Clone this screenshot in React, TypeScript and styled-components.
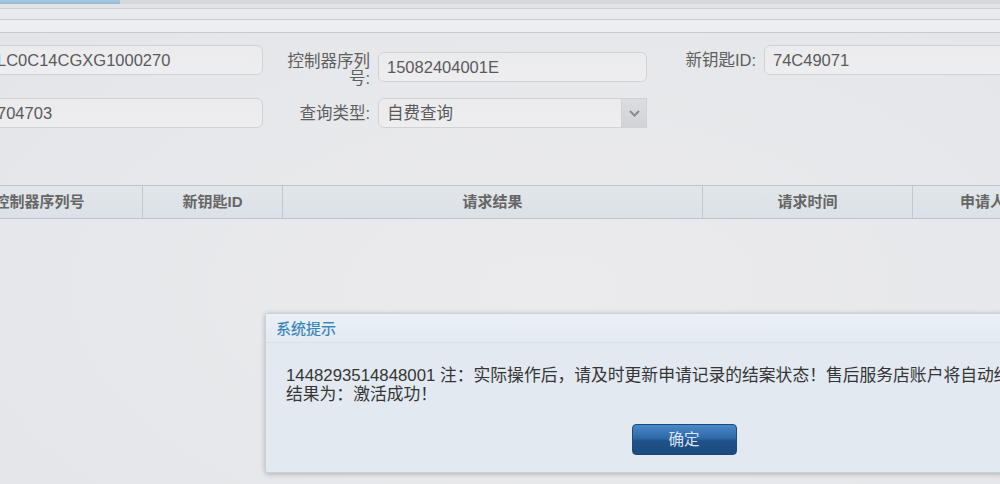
import React from "react";
import styled, { createGlobalStyle } from "styled-components";

const Global = createGlobalStyle`
  html, body { margin: 0; padding: 0; }
  body {
    background: #e7e8eb;
    font-family: "Liberation Sans", "Noto Sans CJK SC", sans-serif;
    color: #555;
  }
`;

const Screen = styled.div`
  position: relative;
  width: 1000px;
  height: 484px;
  overflow: hidden;
  background: radial-gradient(ellipse at 55% 60%, #ebebee 0%, #e6e7ea 70%, #e3e4e7 100%);
`;

const TopStrip = styled.div`
  height: 4px;
  display: flex;
  background: #d7d8de;
`;

const ActiveTab = styled.div`
  width: 120px;
  background: linear-gradient(#a9cde3, #8fb9d4);
`;

const Band = styled.div<{ $h: number; $bg: string; $line: string }>`
  height: ${(p) => p.$h}px;
  background: ${(p) => p.$bg};
  border-bottom: 1px solid ${(p) => p.$line};
`;

const Form = styled.div`
  display: grid;
  grid-template-columns: 275px 99px 269px 101px 260px;
  grid-template-rows: 44px 30px;
  column-gap: 8px;
  row-gap: 9px;
  margin: 12px 0 0 -12px;
`;

const Input = styled.div<{ $offset?: number }>`
  box-sizing: border-box;
  height: 30px;
  margin-top: ${(p) => p.$offset ?? 0}px;
  border: 1px solid #d0d2d6;
  border-radius: 6px;
  background: linear-gradient(#ebebed, #eeeef0);
  padding: 0 8px;
  font-size: 16.5px;
  line-height: 28px;
  color: #5a5a5a;
  white-space: nowrap;
  overflow: hidden;
`;

const Label = styled.div<{ $pt?: number; $lh?: number }>`
  text-align: right;
  font-size: 16.5px;
  line-height: ${(p) => p.$lh ?? 30}px;
  padding-top: ${(p) => p.$pt ?? 0}px;
  color: #5e5e5e;
`;

const Select = styled.div`
  display: flex;
  height: 30px;
`;

const SelectValue = styled(Input)`
  flex: 1;
  border-radius: 6px 0 0 6px;
`;

const SelectButton = styled.div`
  width: 25px;
  box-sizing: border-box;
  border: 1px solid #d0d2d6;
  border-left: none;
  background: linear-gradient(#dcdde0, #d2d3d6);
  display: flex;
  align-items: center;
  justify-content: center;
`;

const TableHead = styled.div`
  display: flex;
  margin: 57px 0 0 -63px;
  height: 34px;
  box-sizing: border-box;
  border-top: 1px solid #b9c6d1;
  border-bottom: 1px solid #b9c6d1;
  background: linear-gradient(#e1e6ea, #dbe1e6);
`;

const HeadCell = styled.div<{ $w: number }>`
  flex: 0 0 ${(p) => p.$w}px;
  box-sizing: border-box;
  border-right: 1px solid #bccad6;
  text-align: center;
  font-size: 15px;
  font-weight: bold;
  line-height: 32px;
  color: #666;
  white-space: nowrap;
`;

const Dialog = styled.div`
  position: absolute;
  left: 265px;
  top: 313px;
  width: 838px;
  height: 160px;
  box-sizing: border-box;
  border: 1px solid #c9d3dd;
  border-radius: 3px;
  background: #e2e9f1;
  box-shadow: 0 1px 5px rgba(0, 0, 0, 0.25);
  display: flex;
  flex-direction: column;
`;

const DialogTitle = styled.div`
  height: 28px;
  padding-left: 10px;
  background: linear-gradient(#eaf0f6, #e3eaf2);
  border-bottom: 1px solid #d9e1ea;
  font-size: 15px;
  line-height: 29px;
  color: #3584b6;
  -webkit-text-stroke: 0.2px #3584b6;
`;

const DialogBody = styled.div`
  padding: 23px 0 0 20px;
  font-size: 16.8px;
  line-height: 19px;
  color: #353535;
  white-space: nowrap;
`;

const DialogFoot = styled.div`
  display: flex;
  justify-content: center;
  margin-top: 20px;
`;

const OkButton = styled.div`
  width: 105px;
  height: 31px;
  box-sizing: border-box;
  border: 1px solid #1d4a7b;
  border-radius: 4px;
  background: linear-gradient(#4a88c7 0%, #2f69a8 45%, #1f5189 55%, #1c4a7e 100%);
  color: #d8e5f3;
  font-size: 15.5px;
  line-height: 29px;
  text-align: center;
`;

export default function App() {
  return (
    <>
      <Global />
      <Screen>
        <TopStrip>
          <ActiveTab />
        </TopStrip>
        <Band $h={4} $bg="#e3e4e8" $line="#cdced3" />
        <Band $h={10} $bg="#e9eaee" $line="#c9cbd0" />
        <Band $h={12} $bg="#eceef1" $line="#c4cad2" />
        <Form>
          <Input>LC0C14CGXG1000270</Input>
          <Label $pt={8} $lh={17}>
            控制器序列
            <br />号:
          </Label>
          <Input $offset={7}>15082404001E</Input>
          <Label>新钥匙ID:</Label>
          <Input>74C49071</Input>

          <Input>704703</Input>
          <Label>查询类型:</Label>
          <Select>
            <SelectValue>自费查询</SelectValue>
            <SelectButton>
              <svg width="11" height="7" viewBox="0 0 11 7">
                <path d="M1 1 L5.5 5.5 L10 1" fill="none" stroke="#8a8b8e" strokeWidth="2" />
              </svg>
            </SelectButton>
          </Select>
        </Form>
        <TableHead>
          <HeadCell $w={206}>控制器序列号</HeadCell>
          <HeadCell $w={140}>新钥匙ID</HeadCell>
          <HeadCell $w={420}>请求结果</HeadCell>
          <HeadCell $w={210}>请求时间</HeadCell>
          <HeadCell $w={140}>申请人</HeadCell>
        </TableHead>
        <Dialog>
          <DialogTitle>系统提示</DialogTitle>
          <DialogBody>
            1448293514848001 注：实际操作后，请及时更新申请记录的结案状态！售后服务店账户将自动结案。
            <br />
            结果为：激活成功！
          </DialogBody>
          <DialogFoot>
            <OkButton>确定</OkButton>
          </DialogFoot>
        </Dialog>
      </Screen>
    </>
  );
}
